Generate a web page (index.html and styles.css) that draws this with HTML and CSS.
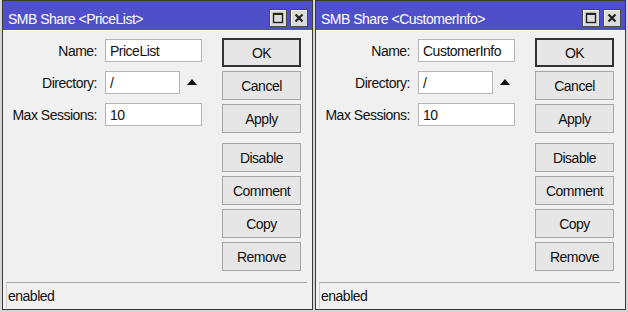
FILE: index.html
```html
<!DOCTYPE html>
<html>
<head>
<meta charset="utf-8">
<link rel="stylesheet" href="styles.css">
</head>
<body>
<div class="desk">
  <div class="win">
    <div class="titlebar">
      <span class="title">SMB Share &lt;PriceList&gt;</span>
      <div class="tbtns">
        <span class="tbtn"><svg width="16" height="16" viewBox="0 0 16 16"><rect x="3.5" y="3.5" width="9" height="9" fill="none" stroke="#222" stroke-width="1.4"/><line x1="3" y1="4" x2="13" y2="4" stroke="#222" stroke-width="2"/></svg></span>
        <span class="tbtn"><svg width="16" height="16" viewBox="0 0 16 16"><path d="M4.5 4.5 L11.5 11.5 M11.5 4.5 L4.5 11.5" stroke="#222" stroke-width="2.2" fill="none"/></svg></span>
      </div>
    </div>
    <div class="content">
      <div class="form">
        <label class="lbl">Name:</label>
        <div class="field"><span class="input">PriceList</span></div>
        <label class="lbl">Directory:</label>
        <div class="field"><span class="input short">/</span><span class="tri"></span></div>
        <label class="lbl">Max Sessions:</label>
        <div class="field"><span class="input">10</span></div>
      </div>
      <div class="buttons">
        <span class="btn default">OK</span>
        <span class="btn">Cancel</span>
        <span class="btn">Apply</span>
        <span class="btn sep">Disable</span>
        <span class="btn">Comment</span>
        <span class="btn">Copy</span>
        <span class="btn">Remove</span>
      </div>
    </div>
    <div class="status">enabled</div>
  </div>
  <div class="win">
    <div class="titlebar">
      <span class="title">SMB Share &lt;CustomerInfo&gt;</span>
      <div class="tbtns">
        <span class="tbtn"><svg width="16" height="16" viewBox="0 0 16 16"><rect x="3.5" y="3.5" width="9" height="9" fill="none" stroke="#222" stroke-width="1.4"/><line x1="3" y1="4" x2="13" y2="4" stroke="#222" stroke-width="2"/></svg></span>
        <span class="tbtn"><svg width="16" height="16" viewBox="0 0 16 16"><path d="M4.5 4.5 L11.5 11.5 M11.5 4.5 L4.5 11.5" stroke="#222" stroke-width="2.2" fill="none"/></svg></span>
      </div>
    </div>
    <div class="content">
      <div class="form">
        <label class="lbl">Name:</label>
        <div class="field"><span class="input">CustomerInfo</span></div>
        <label class="lbl">Directory:</label>
        <div class="field"><span class="input short">/</span><span class="tri"></span></div>
        <label class="lbl">Max Sessions:</label>
        <div class="field"><span class="input">10</span></div>
      </div>
      <div class="buttons">
        <span class="btn default">OK</span>
        <span class="btn">Cancel</span>
        <span class="btn">Apply</span>
        <span class="btn sep">Disable</span>
        <span class="btn">Comment</span>
        <span class="btn">Copy</span>
        <span class="btn">Remove</span>
      </div>
    </div>
    <div class="status">enabled</div>
  </div>
</div>
</body>
</html>
```
FILE: styles.css
```css
* { box-sizing: border-box; }
html, body {
  margin: 0;
  padding: 0;
  width: 628px;
  height: 312px;
  overflow: hidden;
  background: #d6d6d6;
  font-family: "Liberation Sans", Arial, sans-serif;
  font-size: 14px;
  letter-spacing: -0.5px;
  color: #111;
}
.desk {
  display: flex;
  gap: 2px;
  padding-left: 2px;
}
.win {
  width: 311px;
  height: 310px;
  border: 1px solid #3a3a3a;
  background: #f0f0f0;
  display: flex;
  flex-direction: column;
}
.titlebar {
  height: 30px;
  background: #4f4fc9;
  border-bottom: 1px solid #ffffff;
  display: flex;
  justify-content: space-between;
  padding-left: 5px;
  padding-right: 4px;
}
.title {
  color: #fff;
  line-height: 16px;
  padding-top: 10px;
}
.tbtns {
  display: flex;
  gap: 3px;
  padding-top: 8px;
}
.tbtn {
  width: 18px;
  height: 18px;
  background: #dcdcdc;
  border: 1px solid #4a4a4a;
  box-shadow: inset 1px 1px 0 #f4f4f4;
  display: flex;
  align-items: center;
  justify-content: center;
}
.content {
  flex: 1;
  display: flex;
  padding-top: 7px;
}
.form {
  width: 219px;
  display: grid;
  grid-template-columns: 94px 1fr;
  column-gap: 8px;
  row-gap: 9px;
  grid-auto-rows: 23px;
  align-content: start;
  padding-top: 1px;
}
.lbl {
  text-align: right;
  line-height: 23px;
  padding-top: 1px;
}
.field {
  display: flex;
  align-items: center;
}
.input {
  width: 97px;
  height: 23px;
  background: #fff;
  border: 1px solid #b4b4b4;
  line-height: 21px;
  padding-left: 4px;
  padding-top: 1px;
}
.input.short { width: 75px; }
.tri {
  margin-left: 7px;
  width: 0;
  height: 0;
  border-left: 5.5px solid transparent;
  border-right: 5.5px solid transparent;
  border-bottom: 6px solid #111;
  margin-top: -1px;
}
.buttons {
  width: 79px;
  display: flex;
  flex-direction: column;
  gap: 4px;
}
.btn {
  height: 29px;
  background: #e6e6e6;
  border: 1px solid #a6a6a6;
  display: flex;
  align-items: center;
  justify-content: center;
  padding-top: 1px;
}
.btn.default {
  border: 2px solid #333;
}
.btn.sep { margin-top: 6px; }
.status {
  margin: 0 5px 1px 3px;
  height: 26px;
  border-top: 1px solid #a8a8a8;
  border-left: 1px solid #cfcfcf;
  padding-left: 1px;
  line-height: 24px;
  padding-top: 1px;
}
```
